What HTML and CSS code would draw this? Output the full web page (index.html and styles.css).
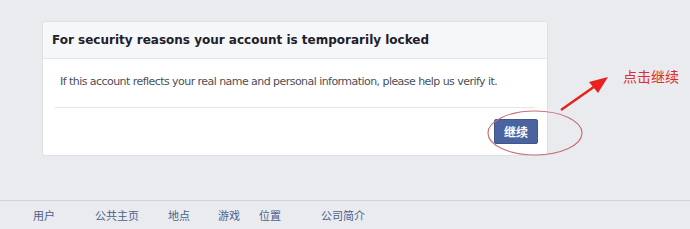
FILE: index.html
```html
<!DOCTYPE html>
<html lang="zh">
<head>
<meta charset="utf-8">
<title>Account locked</title>
<link rel="stylesheet" href="styles.css">
</head>
<body>
<div class="page">
  <div class="main">
    <div class="card">
      <div class="card-header">For security reasons your account is temporarily locked</div>
      <div class="card-body">
        <p class="msg">If this account reflects your real name and personal information, please help us verify it.</p>
      </div>
      <div class="card-footer">
        <button class="btn">继续</button>
      </div>
    </div>
    <svg class="annot" width="690" height="200" viewBox="0 0 690 200">
      <ellipse cx="535" cy="133" rx="47" ry="22" fill="none" stroke="#c8707a" stroke-width="1.2"/>
      <line x1="561" y1="110" x2="598" y2="84" stroke="#e8211c" stroke-width="2.5"/>
      <polygon points="608,77 589,82 598,93" fill="#e8211c"/>
    </svg>
    <div class="hint">点击继续</div>
  </div>
  <div class="footer">
    <a class="f1">用户</a>
    <a class="f2">公共主页</a>
    <a class="f3">地点</a>
    <a class="f4">游戏</a>
    <a class="f5">位置</a>
    <a class="f6">公司简介</a>
  </div>
</div>
</body>
</html>
```
FILE: styles.css
```css
html, body {
  margin: 0;
  padding: 0;
  background: #e9ebee;
}
body {
  font-family: "DejaVu Sans", "Noto Sans CJK SC", sans-serif;
  width: 690px;
  height: 229px;
  overflow: hidden;
}
.page {
  display: flex;
  flex-direction: column;
}
.main {
  position: relative;
  height: 200px;
  padding: 21px 0 0 42px;
  box-sizing: border-box;
}
.card {
  width: 506px;
  background: #fff;
  border: 1px solid #dddfe2;
  border-radius: 3px;
  box-sizing: border-box;
}
.card-header {
  height: 36px;
  background: #f6f7f9;
  border-bottom: 1px solid #e5e5e5;
  font-family: "DejaVu Sans", sans-serif;
  font-weight: bold;
  font-size: 12px;
  color: #1d2129;
  line-height: 36px;
  padding-left: 9px;
  border-radius: 3px 3px 0 0;
}
.card-body {
  margin: 0 12px;
  padding: 16px 0 0 5px;
  height: 49px;
  box-sizing: border-box;
  border-bottom: 1px solid #e5e5e5;
}
.msg {
  margin: 0;
  font-size: 11px;
  color: #4b4f56;
  line-height: 14px;
  letter-spacing: -0.55px;
}
.card-footer {
  display: flex;
  justify-content: flex-end;
  padding: 11px 9px 11px 0;
}
.btn {
  width: 44px;
  height: 25px;
  background: #4b64a0;
  border: 1px solid #40578c;
  border-radius: 2px;
  color: #fff;
  font-family: "Noto Sans CJK SC", sans-serif;
  font-weight: bold;
  font-size: 12px;
  padding: 0;
}
.annot {
  position: absolute;
  left: 0;
  top: 0;
}
.hint {
  position: absolute;
  left: 623px;
  top: 66px;
  font-family: "Noto Sans CJK SC", sans-serif;
  font-size: 14px;
  color: #e02c2c;
}
.footer {
  border-top: 1px solid #cfd1d5;
  height: 28px;
  display: flex;
  align-items: center;
  padding-left: 33px;
  font-family: "Noto Sans CJK SC", sans-serif;
  font-size: 11px;
  color: #4a5f8f;
}
.footer a { white-space: nowrap; }
.f2 { margin-left: 40px; }
.f3 { margin-left: 29px; }
.f4 { margin-left: 28px; }
.f5 { margin-left: 19px; }
.f6 { margin-left: 40px; }
```
